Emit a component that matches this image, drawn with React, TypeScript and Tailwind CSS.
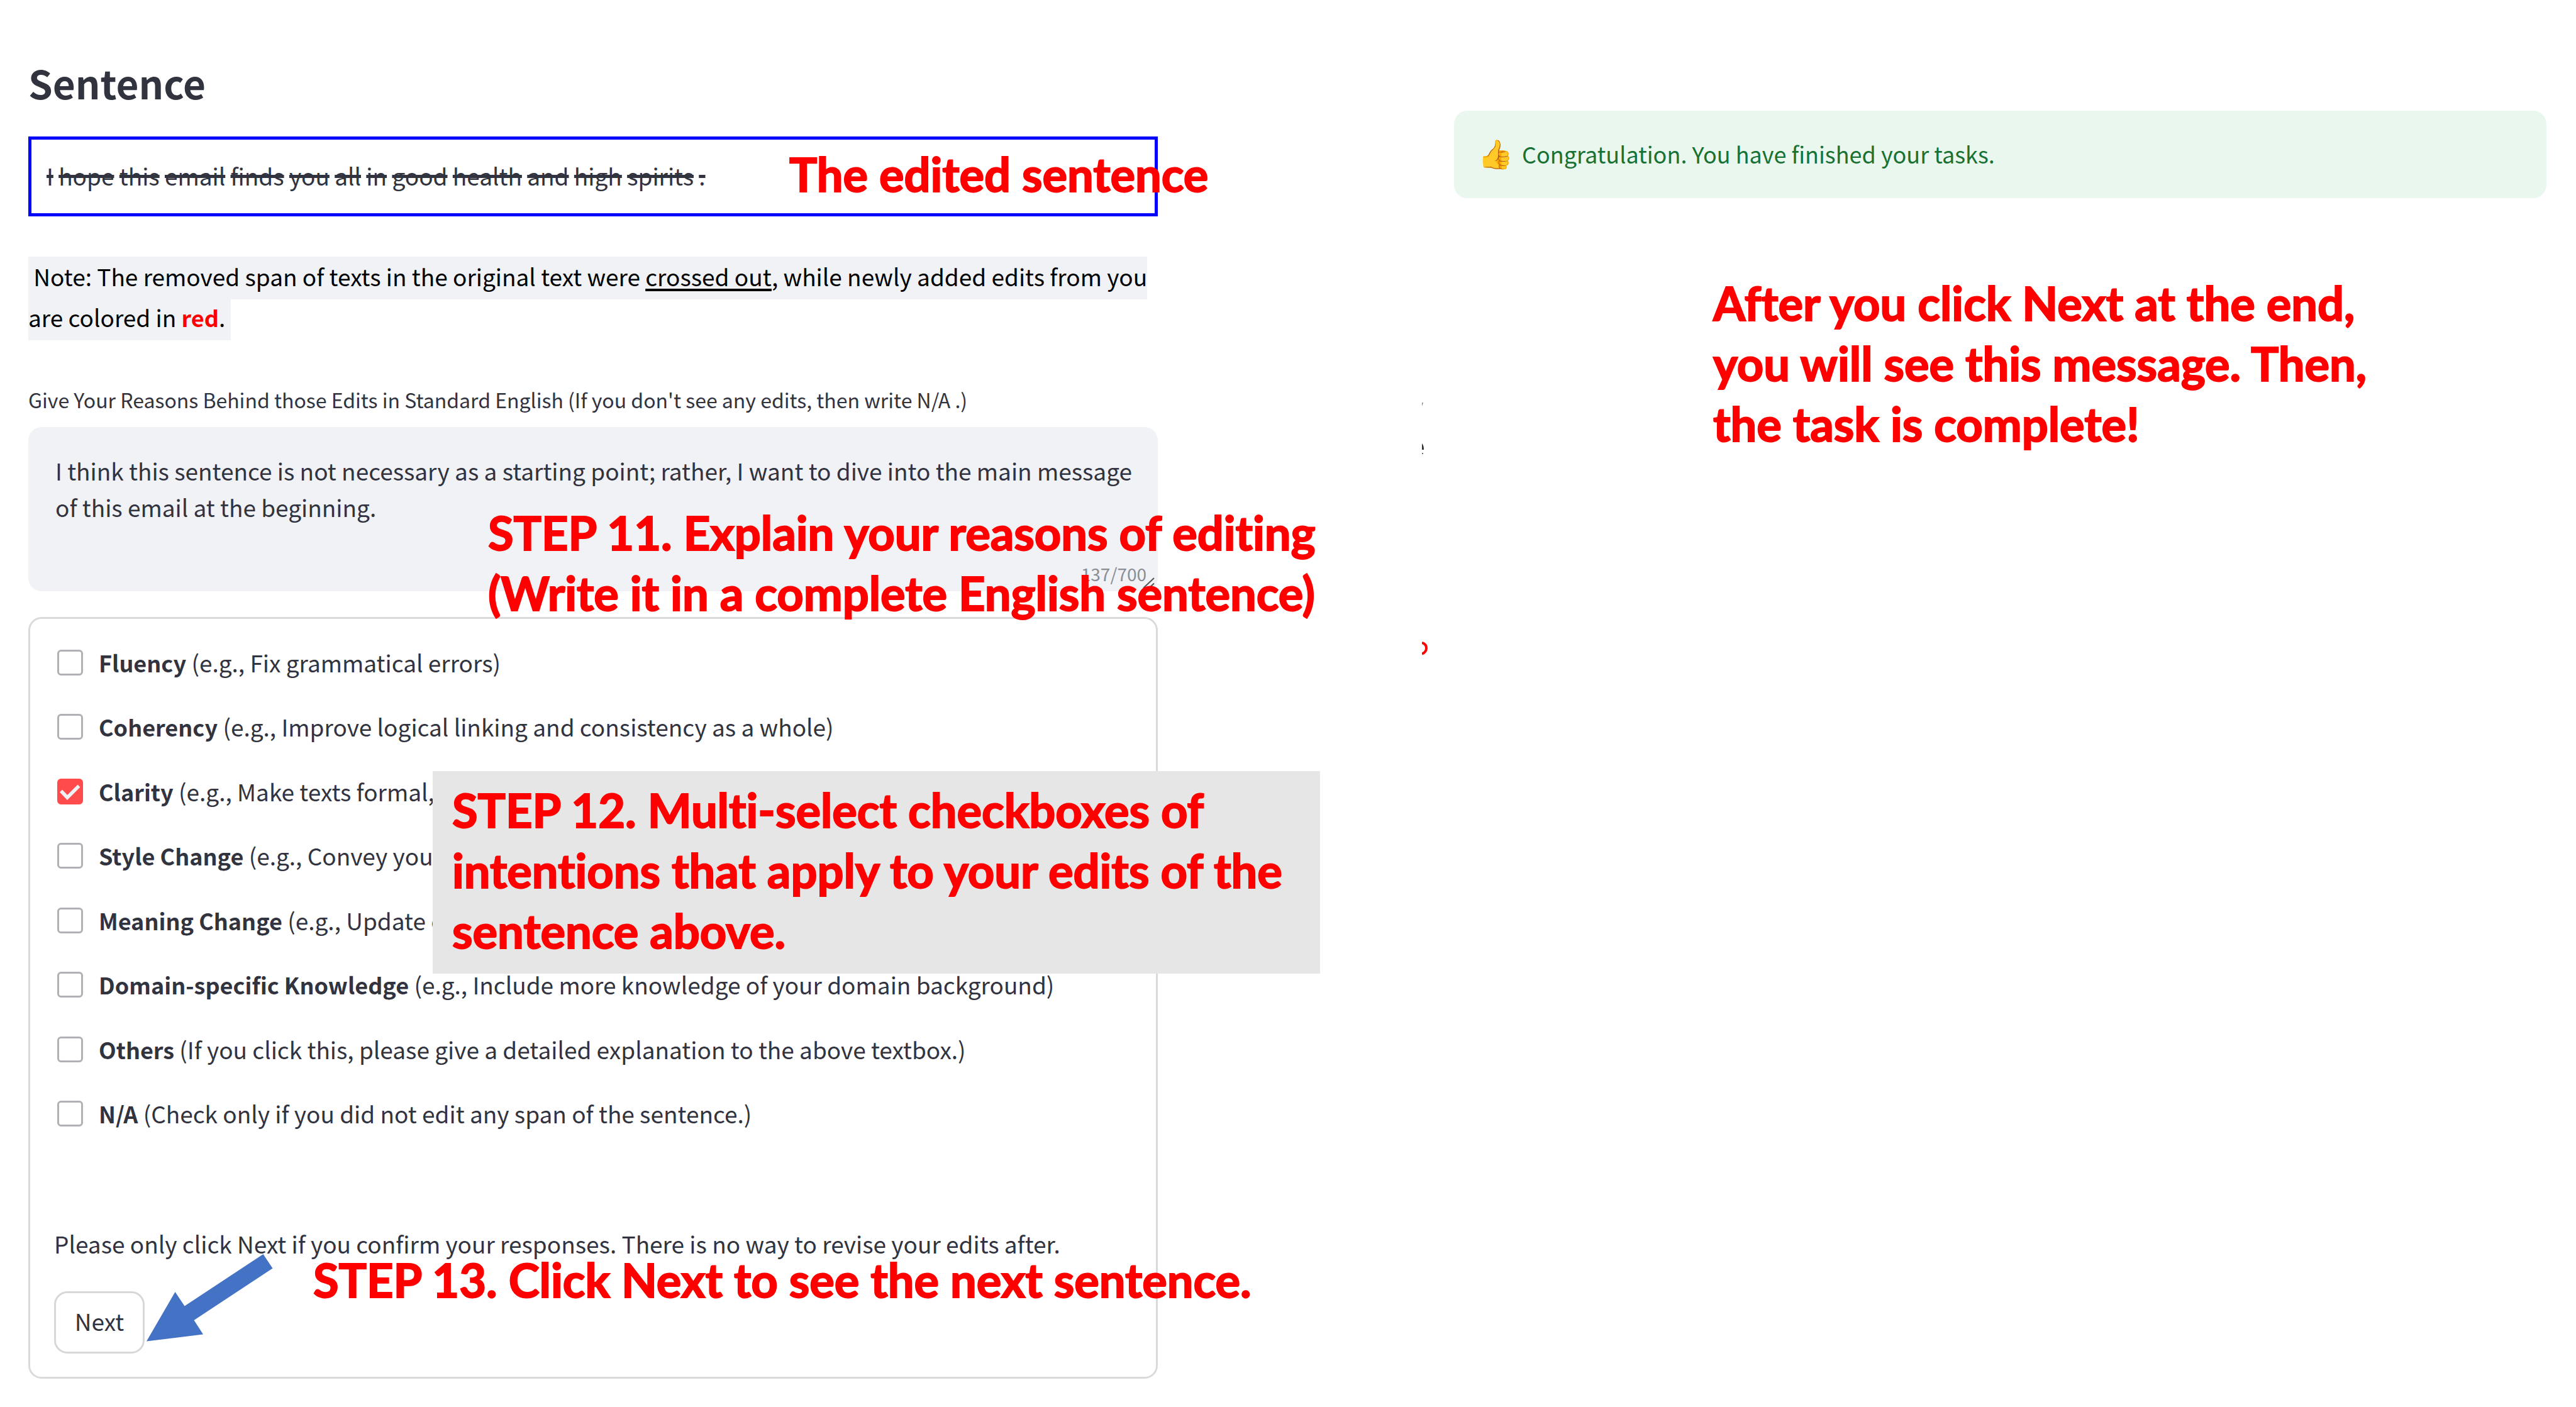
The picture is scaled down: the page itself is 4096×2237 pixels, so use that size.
import React, { useState } from "react";

type Option = { id: string; name: string; hint: string };

const OPTIONS: Option[] = [
  { id: "fluency", name: "Fluency", hint: "(e.g., Fix grammatical errors)" },
  { id: "coherency", name: "Coherency", hint: "(e.g., Improve logical linking and consistency as a whole)" },
  { id: "clarity", name: "Clarity", hint: "(e.g., Make texts formal," },
  { id: "style", name: "Style Change", hint: "(e.g., Convey your" },
  { id: "meaning", name: "Meaning Change", hint: "(e.g., Update c" },
  { id: "domain", name: "Domain-specific Knowledge", hint: "(e.g., Include more knowledge of your domain background)" },
  { id: "others", name: "Others", hint: "(If you click this, please give a detailed explanation to the above textbox.)" },
  { id: "na", name: "N/A", hint: "(Check only if you did not edit any span of the sentence.)" },
];

const REMOVED = "I hope this email finds you all in good health and high spirits .".split(" ");

const ANNOTATION =
  "font-['Lato',sans-serif] font-bold text-[74px] leading-[96px] text-[#ff0000] whitespace-nowrap [font-variant-ligatures:none] [-webkit-text-stroke:2px_#ff0000]";

function OptionRow({ option, checked, onToggle }: { option: Option; checked: boolean; onToggle: () => void }) {
  return (
    <li className="flex items-center">
      <span className="relative size-[41px] shrink-0">
        <input
          id={option.id}
          type="checkbox"
          checked={checked}
          onChange={onToggle}
          className="block size-full appearance-none rounded-[6px] border-[3px] border-[#b0b1b6] bg-white checked:border-[#ff4b4b] checked:bg-[#ff4b4b]"
        />
        {checked && (
          <svg viewBox="0 0 41 41" className="pointer-events-none absolute inset-0 size-full" fill="none" aria-hidden="true">
            <path d="M6 19.5 16 30 34.500 11.500" stroke="#f0f2f6" strokeWidth="5.500" />
          </svg>
        )}
      </span>
      <label htmlFor={option.id} className="pl-[25px] whitespace-nowrap">
        <strong className="text-[36px] font-bold">{option.name}</strong> {option.hint}
      </label>
    </li>
  );
}

function EditedSentence() {
  return (
    <div className="relative mt-[46px] border-[5px] border-[#0000ff] pt-[27px] pb-[29px] pl-6 leading-[61px]">
      {REMOVED.map((word, i) => (
        <React.Fragment key={i}>
          <del className="decoration-[5px]">{word}</del>{" "}
        </React.Fragment>
      ))}
      <p className={`absolute top-[7px] left-[1205px] ${ANNOTATION}`}>The edited sentence</p>
    </div>
  );
}

function Reasons() {
  const [text, setText] = useState(
    "I think this sentence is not necessary as a starting point; rather, I want to dive into the main message of this email at the beginning."
  );
  return (
    <>
      <label htmlFor="reasons" className="mt-[72px] block text-[32px] leading-[52px]">
        Give Your Reasons Behind those Edits in Standard English (If you don't see any edits, then write N/A .)
      </label>
      <div className="relative mt-[18px]">
        <textarea
          id="reasons"
          value={text}
          maxLength={700}
          onChange={(e) => setText(e.target.value)}
          className="block h-[261px] w-full resize-none overflow-hidden rounded-[21px] bg-[#f0f2f6] pt-10 pr-10 pl-[43px] leading-[58px] outline-none"
        />
        <span className="absolute right-[18px] bottom-2 text-[28px] leading-10 text-[#8a8c94]">137/700</span>
        <svg viewBox="0 0 20 18" className="absolute right-1 bottom-1 h-[18px] w-5" fill="none" aria-hidden="true">
          <path d="M1 17 18 1M10 17 18 9.500" stroke="#555555" strokeWidth="2" />
        </svg>
        <p className={`absolute top-[120px] left-[731px] z-10 ${ANNOTATION}`}>
          STEP 11. Explain your reasons of editing
          <br />
          (Write it in a complete English sentence)
        </p>
      </div>
    </>
  );
}

function IntentForm() {
  const [picked, setPicked] = useState<string[]>(["clarity"]);
  const toggle = (id: string) =>
    setPicked((p) => (p.includes(id) ? p.filter((x) => x !== id) : [...p, id]));
  return (
    <form
      onSubmit={(e) => e.preventDefault()}
      className="relative mt-[41px] rounded-[21px] border-[3px] border-[#d9dadc] pt-[18px] pb-[37px] pl-[38px]"
    >
      <ul className="ml-[5px] grid h-[820px] grid-rows-8">
        {OPTIONS.map((o) => (
          <OptionRow key={o.id} option={o} checked={picked.includes(o.id)} onToggle={() => toggle(o.id)} />
        ))}
      </ul>
      <p className="mt-[125px] leading-[60px]">
        Please only click Next if you confirm your responses. There is no way to revise your edits after.
      </p>
      <button
        type="submit"
        className="mt-[46px] block h-[99px] w-36 rounded-[21px] border-[3px] border-[#d6d7d9] bg-white pb-1"
      >
        Next
      </button>

      <div className="absolute top-[242px] left-[640px] w-[1411px] bg-[#e6e6e6] pt-[14px] pb-5 pl-[31px]">
        <p className={ANNOTATION}>
          STEP 12. Multi-select checkboxes of
          <br />
          intentions that apply to your edits of the
          <br />
          sentence above.
        </p>
      </div>
      <p className={`absolute top-[1003px] left-[450px] ${ANNOTATION}`}>STEP 13. Click Next to see the next sentence.</p>
      <svg viewBox="0 0 202 140" className="absolute top-[1009px] left-[184px] h-[140px] w-[202px]" aria-hidden="true">
        <path d="M186.500 1 201.500 23.500 76.500 106 91 128.500 1 139.500 46.500 61 61.500 83.500Z" fill="#4472c4" />
      </svg>
    </form>
  );
}

function Completion() {
  return (
    <section className="relative pt-44">
      <div
        role="status"
        className="flex h-[139px] items-center rounded-[21px] bg-[#eaf7ee] pb-1 pl-[38px] text-[36px] text-[#177233]"
      >
        <span className="w-[70px] shrink-0 pb-1 text-[45px]">👍</span>
        <span>Congratulation. You have finished your tasks.</span>
      </div>
      <p className={`mt-[119px] ml-[412px] ${ANNOTATION}`}>
        After you click Next at the end,
        <br />
        you will see this message. Then,
        <br />
        the task is complete!
      </p>
      <svg viewBox="0 0 10 404" className="absolute top-[638px] left-[-51px] h-[404px] w-[10px]" fill="none" aria-hidden="true">
        <path d="M0 2H2L0 8Z" fill="#8a8c94" />
        <path d="M0 67Q3 70 3 77H0Z" fill="#31333f" />
        <path d="M0 82H2V84H0Z" fill="#6b6d76" />
        <path d="M0 384Q7 386 7 392.500T0 401.500" stroke="#ff0000" strokeWidth="4" />
      </svg>
    </section>
  );
}

export default function App() {
  return (
    <main className="grid min-h-screen grid-cols-[1796fr_1737fr] gap-x-[471px] overflow-x-hidden bg-white pr-[47px] pl-[45px] font-['Noto_Sans_CJK_SC','Noto_Sans',sans-serif] text-[37px] text-[#31333f]">
      <section className="min-w-0 pt-[91px]">
        <h3 className="text-[62px] leading-[80px] font-bold">Sentence</h3>
        <EditedSentence />
        <p className="mt-[63px] leading-[65px] text-black">
          <span className="bg-[#f0f2f6] pt-1 pb-[10px]">
            {"\u00a0"}Note: The removed span of texts in the original text were{" "}
            <u className="decoration-[4px] underline-offset-[4px]">crossed out</u>, while newly added edits from you are
            colored in <strong className="text-[36px] font-bold text-[#ff0000]">red</strong>.{"\u00a0"}
          </span>
        </p>
        <Reasons />
        <IntentForm />
      </section>
      <Completion />
    </main>
  );
}
